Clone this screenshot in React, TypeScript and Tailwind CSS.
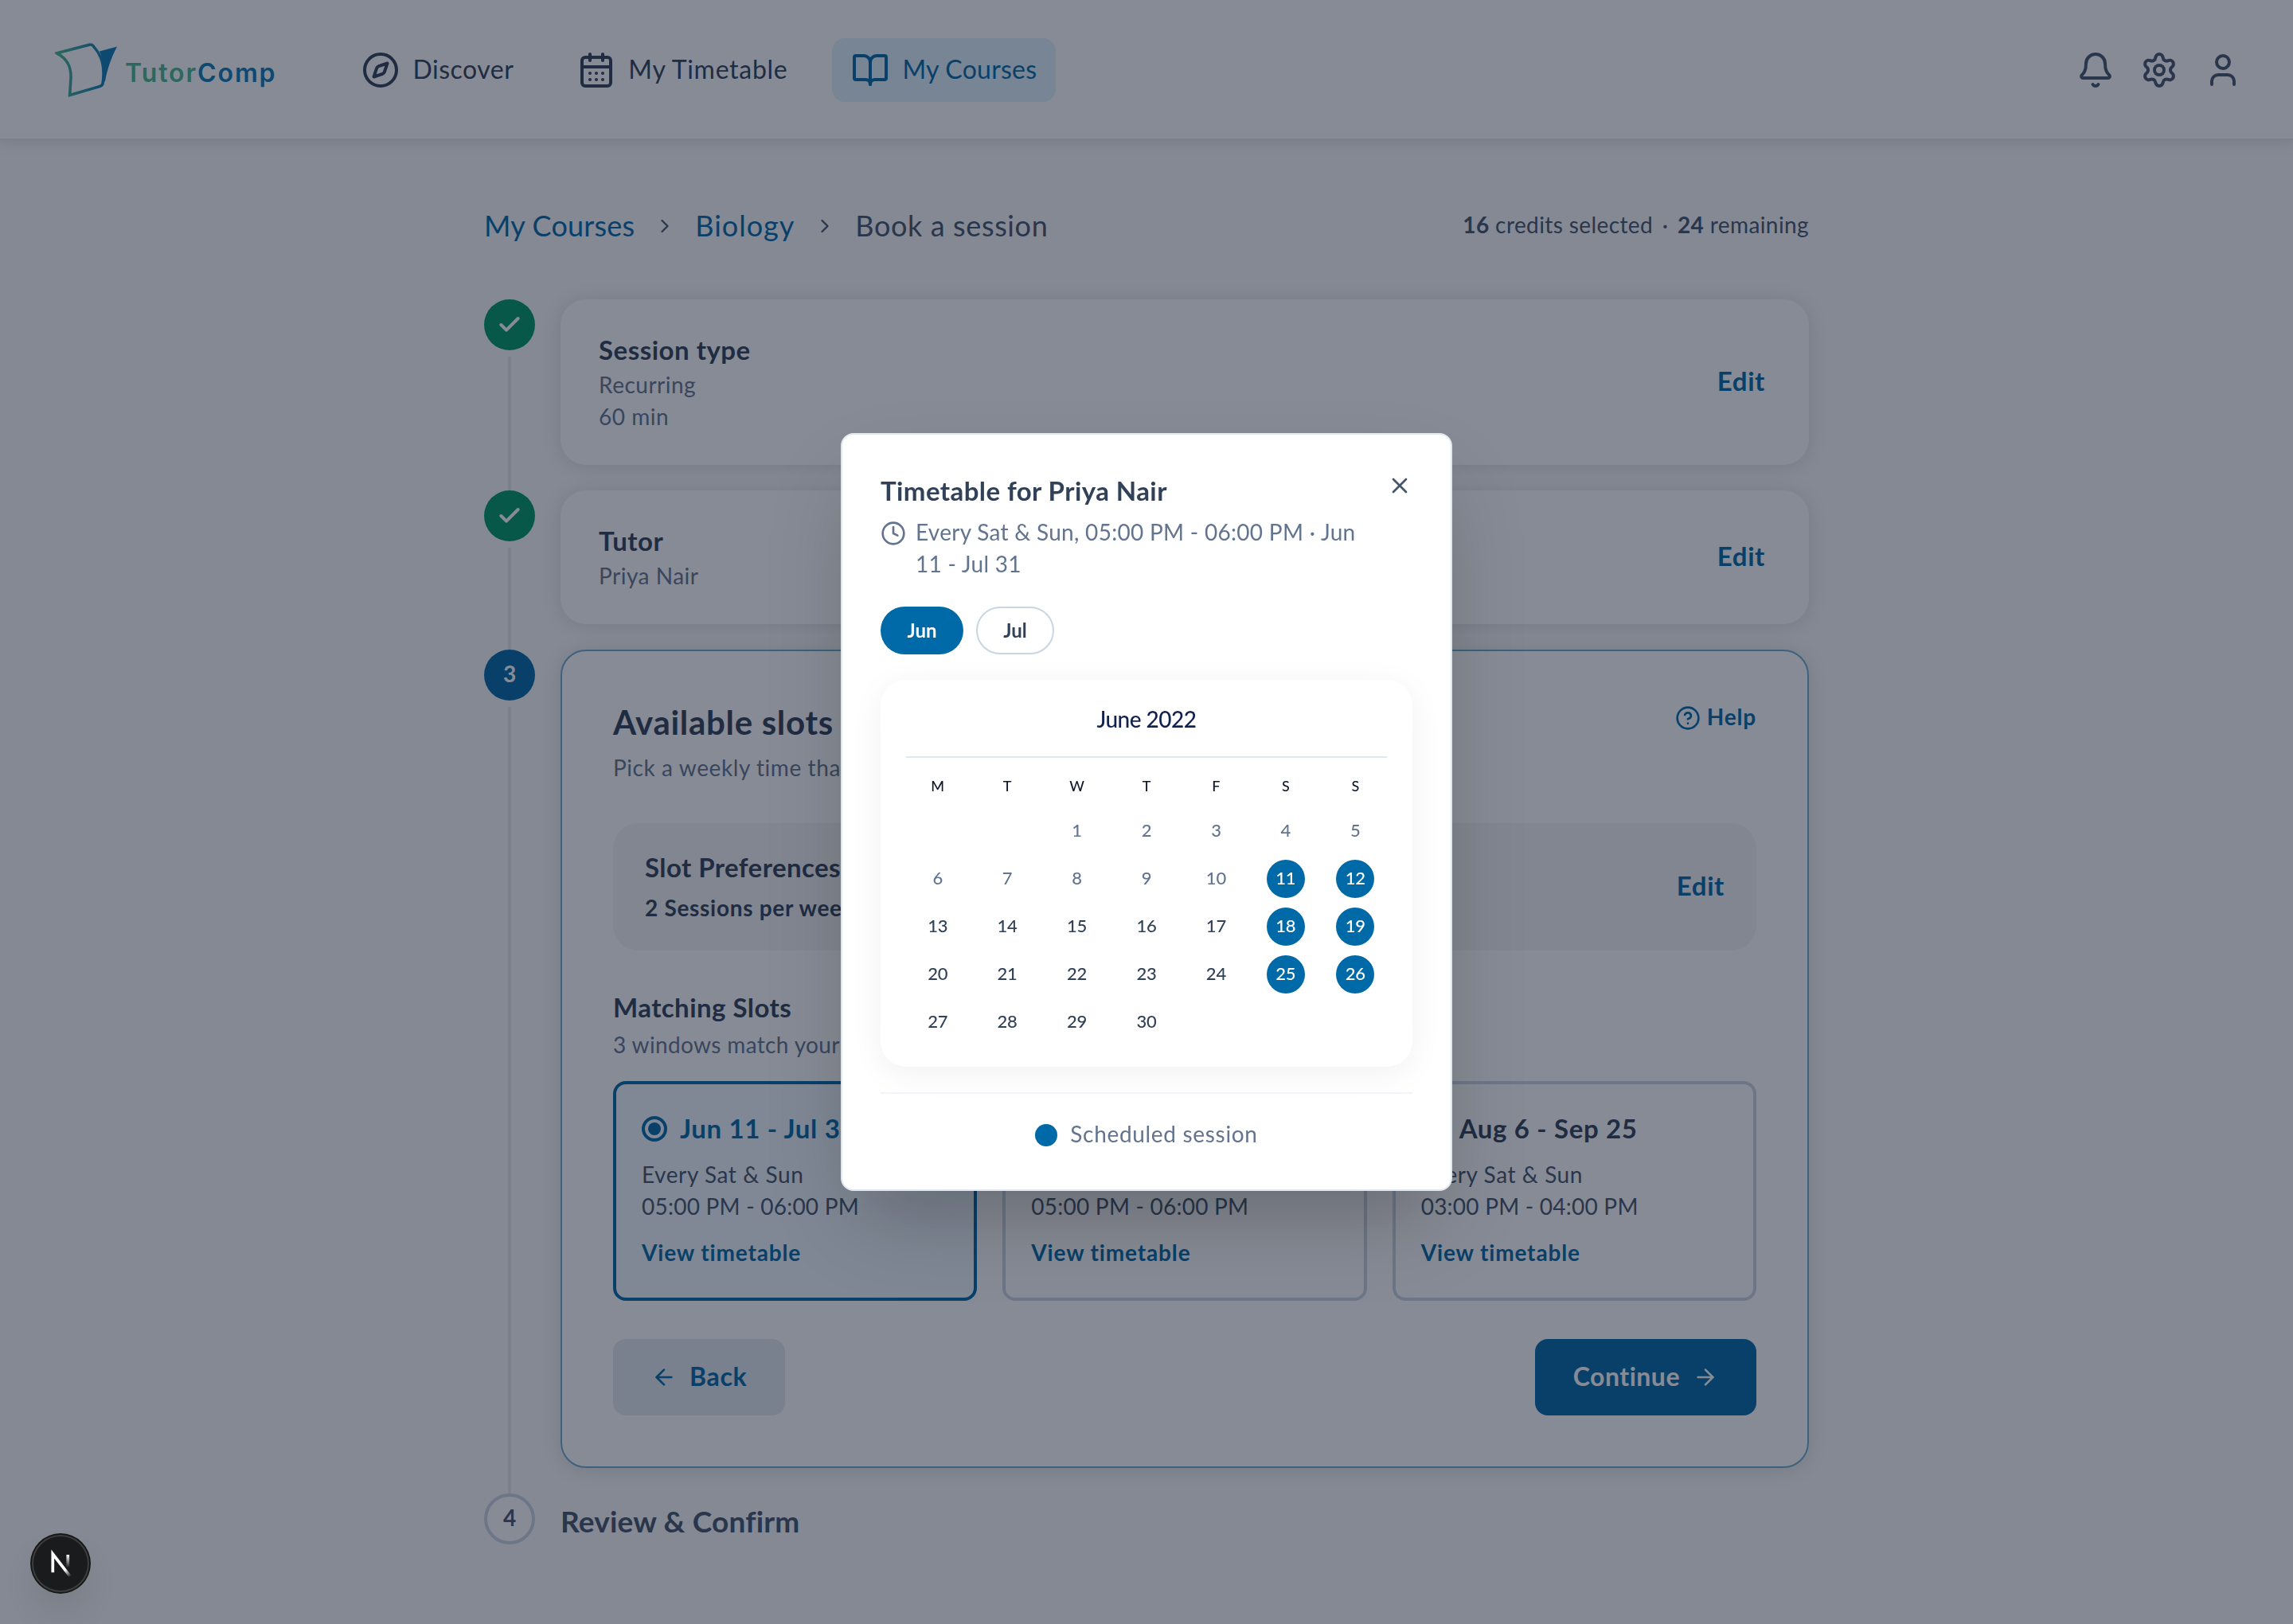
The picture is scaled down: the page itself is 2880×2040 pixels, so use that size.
import React from 'react';
import {
  ArrowLeft,
  ArrowRight,
  Bell,
  BookOpen,
  CalendarDays,
  Check,
  ChevronRight,
  CircleHelp,
  Clock,
  Compass,
  Settings,
  User,
  X,
} from 'lucide-react';

interface SlotOption {
  range: string;
  days: string;
  time: string;
  selected?: boolean;
}

const slots: SlotOption[] = [
  { range: 'Jun 11 - Jul 31', days: 'Every Sat & Sun', time: '05:00 PM - 06:00 PM', selected: true },
  { range: 'Jul 9 - Aug 28', days: 'Every Sat & Sun', time: '05:00 PM - 06:00 PM' },
  { range: 'Aug 6 - Sep 25', days: 'Every Sat & Sun', time: '03:00 PM - 04:00 PM' },
];

const weekdays = ['M', 'T', 'W', 'T', 'F', 'S', 'S'];
const scheduledDays = [11, 12, 18, 19, 25, 26];
// June 2022 starts on a Wednesday
const leadingBlanks = 2;
const daysInMonth = 30;
const firstBookableDay = 11;

const Logo = () => (
  <div className="flex items-center">
    <svg width="80" height="72" viewBox="68 52 80 72" fill="none">
      <defs>
        <linearGradient id="page" x1="70" y1="90" x2="130" y2="90" gradientUnits="userSpaceOnUse">
          <stop stopColor="#48b890" />
          <stop offset="1" stopColor="#0d7ab8" />
        </linearGradient>
      </defs>
      <path
        d="M70.5 66.8L111 56.3Q114 55.4 116 57.6C124.500 67 128.500 76 129 90C129.200 96 128.800 101 128 105Q127.300 107.600 124 108.600L86.600 119.500L88 98C88.500 84 84 74 70.500 66.800Z"
        stroke="url(#page)"
        strokeWidth="3.6"
      />
      <path d="M124 64.5L146 58.5C138 74 133.500 88 131 102L128 104C129.500 88 129 76 124 64.500Z" fill="#0d7ab8" />
    </svg>
    <p className="ml-2 pt-2 font-['Inter',sans-serif] text-[32px] leading-10 font-semibold tracking-[1.9px]">
      <span className="text-[#48b890]">Tutor</span>
      <span className="text-[#0d7ab8]">Comp</span>
    </p>
  </div>
);

const Header = () => (
  <header className="flex h-44 items-center justify-between border-b-2 border-slate-200 bg-white pt-0.5 pr-16 pl-[69px] shadow-[0_4px_16px_rgba(0,0,0,0.1)]">
    <div className="flex items-center">
      <Logo />
      <nav className="ml-[83px] flex gap-8 text-[32px] leading-10 text-slate-700">
        <a className="flex h-20 items-center gap-4 px-6">
          <Compass size={48} />
          <span className="pb-0.5 tracking-[0.5px]">Discover</span>
        </a>
        <a className="flex h-20 items-center gap-4 px-6">
          <CalendarDays size={48} />
          <span className="pb-0.5 tracking-[0.7px]">My Timetable</span>
        </a>
        <a className="flex h-20 items-center gap-4 rounded-2xl bg-sky-100 px-6 text-sky-700">
          <BookOpen size={48} />
          <span className="pb-0.5 tracking-[0.25px]">My Courses</span>
        </a>
      </nav>
    </div>
    <div className="flex gap-8 text-slate-600">
      <Bell size={48} />
      <Settings size={48} />
      <User size={48} />
    </div>
  </header>
);

const Breadcrumbs = () => (
  <div className="mb-[66px] flex h-14 items-center justify-between">
    <div className="flex items-center gap-6 pt-0.5 text-[36px] leading-[56px] text-slate-600">
      <a className="tracking-[0.2px] text-sky-700">My Courses</a>
      <ChevronRight size={28} className="mt-0.5" />
      <a className="tracking-[1px] text-sky-700">Biology</a>
      <ChevronRight size={28} className="mt-0.5" />
      <span className="tracking-[0.62px]">Book a session</span>
    </div>
    <p className="text-[28px] tracking-[0.4px] text-slate-600">
      <span className="font-bold">16</span> credits selected <span className="mx-1">·</span>{' '}
      <span className="font-bold">24</span> remaining
    </p>
  </div>
);

const Step = ({ marker, last, children }: { marker: React.ReactNode; last?: boolean; children: React.ReactNode }) => (
  <div className="flex gap-8">
    <div className="flex w-16 shrink-0 flex-col items-center">
      {marker}
      {!last && <div className="mt-2 -mb-8 w-1 flex-1 bg-slate-200" />}
    </div>
    <div className="min-w-0 flex-1">{children}</div>
  </div>
);

const DoneMarker = () => (
  <div className="flex size-16 items-center justify-center rounded-full bg-emerald-600 text-white">
    <Check size={32} strokeWidth={3} />
  </div>
);

const SummaryCard = ({ title, lines }: { title: string; lines: string[] }) => (
  <div className="flex items-center justify-between rounded-[32px] bg-white pt-[39px] pr-[55px] pb-[41px] pl-12 shadow-[0_2px_24px_rgba(0,0,0,0.12)]">
    <div>
      <h3 className="text-[33px] leading-[48px] font-bold tracking-[0.5px] text-slate-700">{title}</h3>
      {lines.map((line) => (
        <p key={line} className="text-[28px] leading-10 tracking-[0.5px] text-slate-500">
          {line}
        </p>
      ))}
    </div>
    <button className="text-[33px] font-bold tracking-[0.6px] text-sky-700">Edit</button>
  </div>
);

const SlotCard = ({ slot }: { slot: SlotOption }) => (
  <div
    className={`h-[276px] rounded-2xl border-4 px-8 pt-8 ${
      slot.selected ? 'border-sky-700 bg-sky-50' : 'border-slate-300 bg-white'
    }`}
  >
    <div className="flex h-12 items-center gap-4">
      <span
        className={`flex size-8 items-center justify-center rounded-full border-4 ${
          slot.selected ? 'border-sky-700' : 'border-slate-300'
        }`}
      >
        {slot.selected && <span className="size-4 rounded-full bg-sky-700" />}
      </span>
      <h4
        className={`pb-[3px] text-[33px] leading-10 font-bold tracking-[0.65px] ${
          slot.selected ? 'text-sky-700' : 'text-slate-700'
        }`}
      >
        {slot.range}
      </h4>
    </div>
    <div className="mt-[13px] text-[28px] leading-10 text-slate-600">
      <p className="tracking-[0.58px]">{slot.days}</p>
      <p className="tracking-[0.23px]">{slot.time}</p>
    </div>
    <button className="mt-[18px] block text-[28px] leading-10 font-bold tracking-[0.85px] text-sky-700">
      View timetable
    </button>
  </div>
);

const AvailableSlots = () => (
  <section className="rounded-[32px] border-2 border-[#6cabd3] bg-white px-16 pt-[61px] pb-16 shadow-[0_2px_24px_rgba(0,0,0,0.12)]">
    <div className="flex items-start justify-between">
      <div>
        <h2 className="text-[42px] leading-[56px] font-bold tracking-[0.7px] text-slate-700">Available slots</h2>
        <p className="mt-[9px] text-[28px] leading-10 tracking-[0.58px] text-slate-500">
          Pick a weekly time that works for you.
        </p>
      </div>
      <button className="mt-[7px] flex items-center gap-2 text-[28px] leading-8 font-bold text-sky-700">
        <CircleHelp size={32} />
        <span className="-mt-1 tracking-[0.8px]">Help</span>
      </button>
    </div>

    <div className="mt-[50px] flex h-40 justify-between rounded-[32px] bg-zinc-100 px-10 pt-[31px]">
      <div className="text-slate-700">
        <h3 className="text-[33px] leading-[48px] font-bold tracking-[0.43px]">Slot Preferences</h3>
        <p className="mt-[7px] text-[28px] leading-10 font-bold tracking-[0.7px]">2 Sessions per week</p>
      </div>
      <button className="self-center pb-[33px] text-[33px] font-bold tracking-[0.6px] text-sky-700">Edit</button>
    </div>

    <h3 className="mt-[47px] text-[33px] leading-[48px] font-bold tracking-[0.45px] text-slate-700">Matching Slots</h3>
    <p className="mt-[3px] text-[28px] leading-10 tracking-[0.36px] text-slate-500">
      3 windows match your preferences.
    </p>
    <div className="mt-[26px] grid grid-cols-3 gap-8">
      {slots.map((slot) => (
        <SlotCard key={slot.range} slot={slot} />
      ))}
    </div>

    <div className="mt-12 flex justify-between text-[32px] leading-10 font-bold">
      <button className="flex h-24 items-center gap-4 rounded-2xl bg-slate-200 px-12 text-sky-700">
        <ArrowLeft size={32} />
        <span className="pb-[3px] tracking-[0.7px]">Back</span>
      </button>
      <button className="flex h-24 items-center gap-4 rounded-2xl bg-sky-700 px-12 text-white">
        <span className="pb-[3px] tracking-[0.5px]">Continue</span>
        <ArrowRight size={32} />
      </button>
    </div>
  </section>
);

const Calendar = () => {
  const days = Array.from({ length: daysInMonth }, (_, i) => i + 1);

  return (
    <div className="mt-8 rounded-[32px] bg-white px-8 pt-[29px] pb-8 shadow-[0_8px_40px_rgba(0,0,0,0.06)]">
      <p className="text-center text-[28px] leading-10 font-medium tracking-[-0.5px] text-[#12224f]">June 2022</p>
      <div className="mt-[27px] h-0.5 bg-slate-200" />
      <div className="mt-[23px] grid grid-cols-7 gap-x-2 text-center text-[18px] leading-6 font-medium text-slate-900">
        {weekdays.map((day, i) => (
          <span key={i}>{day}</span>
        ))}
      </div>
      <div className="mt-[21px] grid grid-cols-7 gap-x-2 gap-y-3 text-[22px] font-medium">
        {[...Array(leadingBlanks)].map((_, i) => (
          <span key={i} />
        ))}
        {days.map((day) => {
          const scheduled = scheduledDays.includes(day);
          const color = scheduled
            ? 'bg-sky-700 text-white'
            : day < firstBookableDay
              ? 'text-slate-500'
              : 'text-slate-700';
          return (
            <span
              key={day}
              className={`flex size-12 items-center justify-center justify-self-center rounded-full pb-1 tracking-[-0.2px] ${color}`}
            >
              {day}
            </span>
          );
        })}
      </div>
    </div>
  );
};

const TimetableModal = () => (
  <div className="fixed inset-0 flex items-center justify-center bg-slate-900/50">
    <div className="w-[768px] rounded-2xl border-2 border-slate-200 bg-white px-12 pt-[46px] pb-12 shadow-[0_50px_100px_-24px_rgba(0,0,0,0.25)]">
      <div className="flex items-start justify-between">
        <h2 className="text-[33px] leading-[48px] font-bold tracking-[0.42px] text-slate-700">
          Timetable for Priya Nair
        </h2>
        <X size={32} className="mt-0.5 text-slate-600" />
      </div>
      <div className="mt-2 flex gap-3 text-slate-500">
        <Clock size={32} className="mt-1.5 shrink-0" />
        <p className="w-[570px] text-[28px] leading-10 tracking-[0.29px]">
          Every Sat &amp; Sun, 05:00 PM - 06:00 PM · Jun 11 - Jul 31
        </p>
      </div>
      <div className="mt-[34px] flex gap-4 text-[24px] leading-8 font-bold">
        <button className="flex h-[60px] w-[104px] items-center justify-center rounded-full bg-sky-700 text-white">
          Jun
        </button>
        <button className="flex h-[60px] w-[98px] items-center justify-center rounded-full border-2 border-slate-300 text-slate-700">
          Jul
        </button>
      </div>
      <Calendar />
      <div className="mt-8 flex items-center justify-center gap-4 border-t-2 border-slate-100 pt-8">
        <span className="size-7 rounded-full bg-sky-700" />
        <span className="-mt-0.5 mb-0.5 text-[28px] leading-10 tracking-[0.68px] text-slate-500">
          Scheduled session
        </span>
      </div>
    </div>
  </div>
);

const DevBadge = () => (
  <div className="fixed bottom-10 left-10 flex size-[72px] items-center justify-center rounded-full border-2 border-[#3d3d3e] bg-[#1a1b1d] shadow-[0_0_0_2px_#171717,0_24px_48px_-8px_rgba(0,0,0,0.14)]">
    <svg width="80" height="80" viewBox="0 0 40 40" fill="none" className="shrink-0">
      <defs>
        <linearGradient id="diag" x1="9.956" y1="11.123" x2="15.478" y2="17.967" gradientUnits="userSpaceOnUse">
          <stop stopColor="white" />
          <stop offset="0.604" stopColor="white" stopOpacity="0" />
          <stop offset="1" stopColor="white" stopOpacity="0" />
        </linearGradient>
        <linearGradient id="stem" x1="11.822" y1="1.4" x2="11.791" y2="9.625" gradientUnits="userSpaceOnUse">
          <stop stopColor="white" />
          <stop offset="1" stopColor="white" stopOpacity="0" />
        </linearGradient>
      </defs>
      <g transform="translate(12.8 13)">
        <path d="M13.3 15.2L2.343 1V12.600" stroke="url(#diag)" strokeWidth="1.86" />
        <path d="M11.825 1.5V13.1" stroke="url(#stem)" strokeWidth="1.86" />
      </g>
    </svg>
  </div>
);

const App = () => {
  return (
    <div className="h-[2040px] overflow-hidden bg-[#f9fafb] font-['Lato',sans-serif]">
      <Header />
      <main className="mx-auto w-[1664px] pt-[78px]">
        <Breadcrumbs />
        <div className="flex flex-col gap-8">
          <Step marker={<DoneMarker />}>
            <SummaryCard title="Session type" lines={['Recurring', '60 min']} />
          </Step>
          <Step marker={<DoneMarker />}>
            <SummaryCard title="Tutor" lines={['Priya Nair']} />
          </Step>
          <Step
            marker={
              <div className="flex size-16 items-center justify-center rounded-full bg-sky-700 pb-1 text-[28px] font-bold text-white">
                3
              </div>
            }
          >
            <AvailableSlots />
          </Step>
          <Step
            last
            marker={
              <div className="flex size-16 items-center justify-center rounded-full border-4 border-slate-300 bg-white pb-1 text-[28px] font-bold text-slate-600">
                4
              </div>
            }
          >
            <h2 className="mt-[7px] text-[37px] leading-[56px] font-bold tracking-[0.2px] text-slate-600">
              Review &amp; Confirm
            </h2>
          </Step>
        </div>
      </main>
      <TimetableModal />
      <DevBadge />
    </div>
  );
};

export default App;
